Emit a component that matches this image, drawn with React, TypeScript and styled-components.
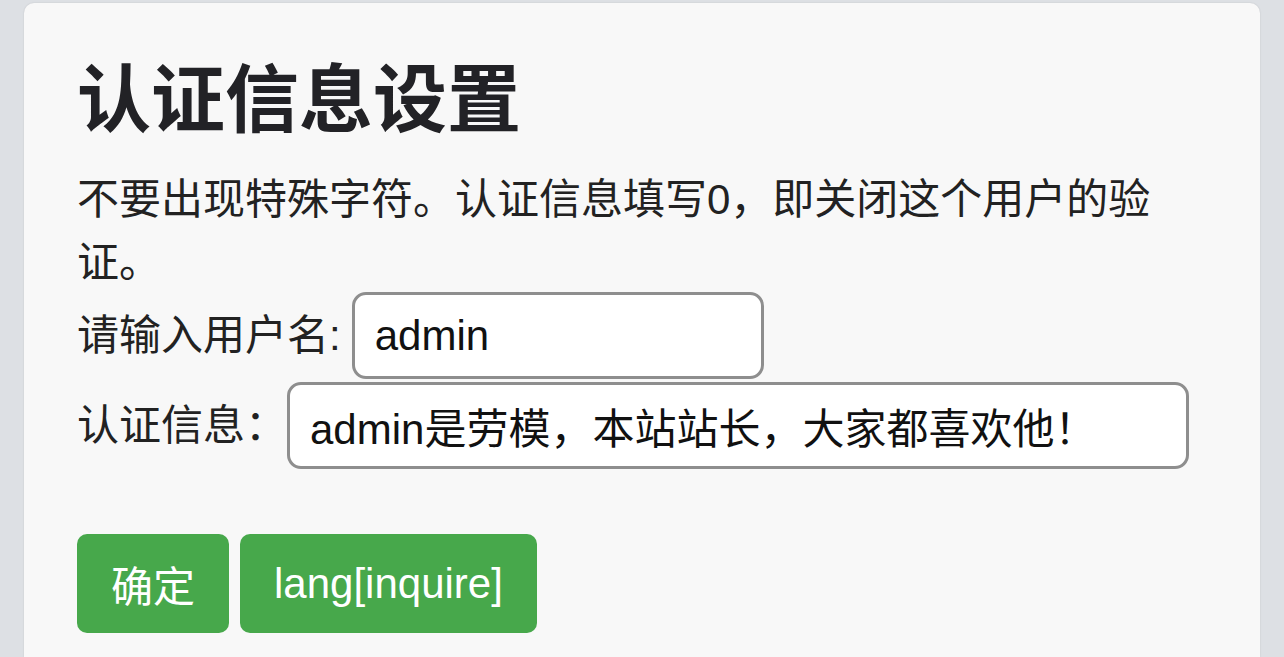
import * as React from "react";
import styled, { createGlobalStyle } from "styled-components";

const GlobalStyle = createGlobalStyle`
  html, body {
    margin: 0;
    padding: 0;
    background: #dde0e4;
    font-family: "Liberation Sans", "Noto Sans CJK SC", sans-serif;
    color: #222;
    overflow: hidden;
  }
`;

const Card = styled.div`
  box-sizing: border-box;
  margin: 3px 24px 0 24px;
  height: calc(100vh - 3px);
  padding: 53px 54px 0 53px;
  background: #f8f8f8;
  border-radius: 10px 10px 0 0;
  box-shadow: 0 0 2px rgba(0, 0, 0, 0.12);
`;

const Title = styled.h1`
  margin: 0 0 23px 0;
  font-size: 74px;
  line-height: 89px;
  font-weight: 700;
  color: #222226;
`;

const Hint = styled.p`
  margin: 0;
  max-width: 1100px;
  font-size: 42px;
  line-height: 63px;
`;

const Row = styled.div<{ $mt: number }>`
  display: flex;
  align-items: center;
  margin-top: ${(p) => p.$mt}px;
`;

const Label = styled.span`
  font-size: 42px;
  line-height: 63px;
  white-space: nowrap;
`;

const Field = styled.input<{ $width: number; $gap: number }>`
  box-sizing: border-box;
  width: ${(p) => p.$width}px;
  height: 87px;
  margin-left: ${(p) => p.$gap}px;
  padding: 0 20px;
  border: 3px solid #8e8e8e;
  border-radius: 14px;
  background: #fff;
  font-family: "Liberation Sans", "Noto Sans CJK SC", sans-serif;
  font-size: 42px;
  color: #111;
  outline: none;
`;

const Actions = styled.div`
  display: flex;
  gap: 11px;
  margin-top: 65px;
`;

const Button = styled.button`
  box-sizing: border-box;
  height: 99px;
  padding: 0 34px;
  border: none;
  border-radius: 10px;
  background: #47a84b;
  color: #fff;
  font-family: "Liberation Sans", "Noto Sans CJK SC", sans-serif;
  font-size: 42px;
  cursor: pointer;
`;

export default function App() {
  return (
    <>
      <GlobalStyle />
      <Card>
        <Title>认证信息设置</Title>
        <Hint>不要出现特殊字符。认证信息填写0，即关闭这个用户的验证。</Hint>
        <Row $mt={-2}>
          <Label>请输入用户名:</Label>
          <Field $width={412} $gap={11} defaultValue="admin" />
        </Row>
        <Row $mt={3}>
          <Label>认证信息：</Label>
          <Field
            $width={902}
            $gap={0}
            defaultValue="admin是劳模，本站站长，大家都喜欢他！"
          />
        </Row>
        <Actions>
          <Button>确定</Button>
          <Button>lang[inquire]</Button>
        </Actions>
      </Card>
    </>
  );
}
